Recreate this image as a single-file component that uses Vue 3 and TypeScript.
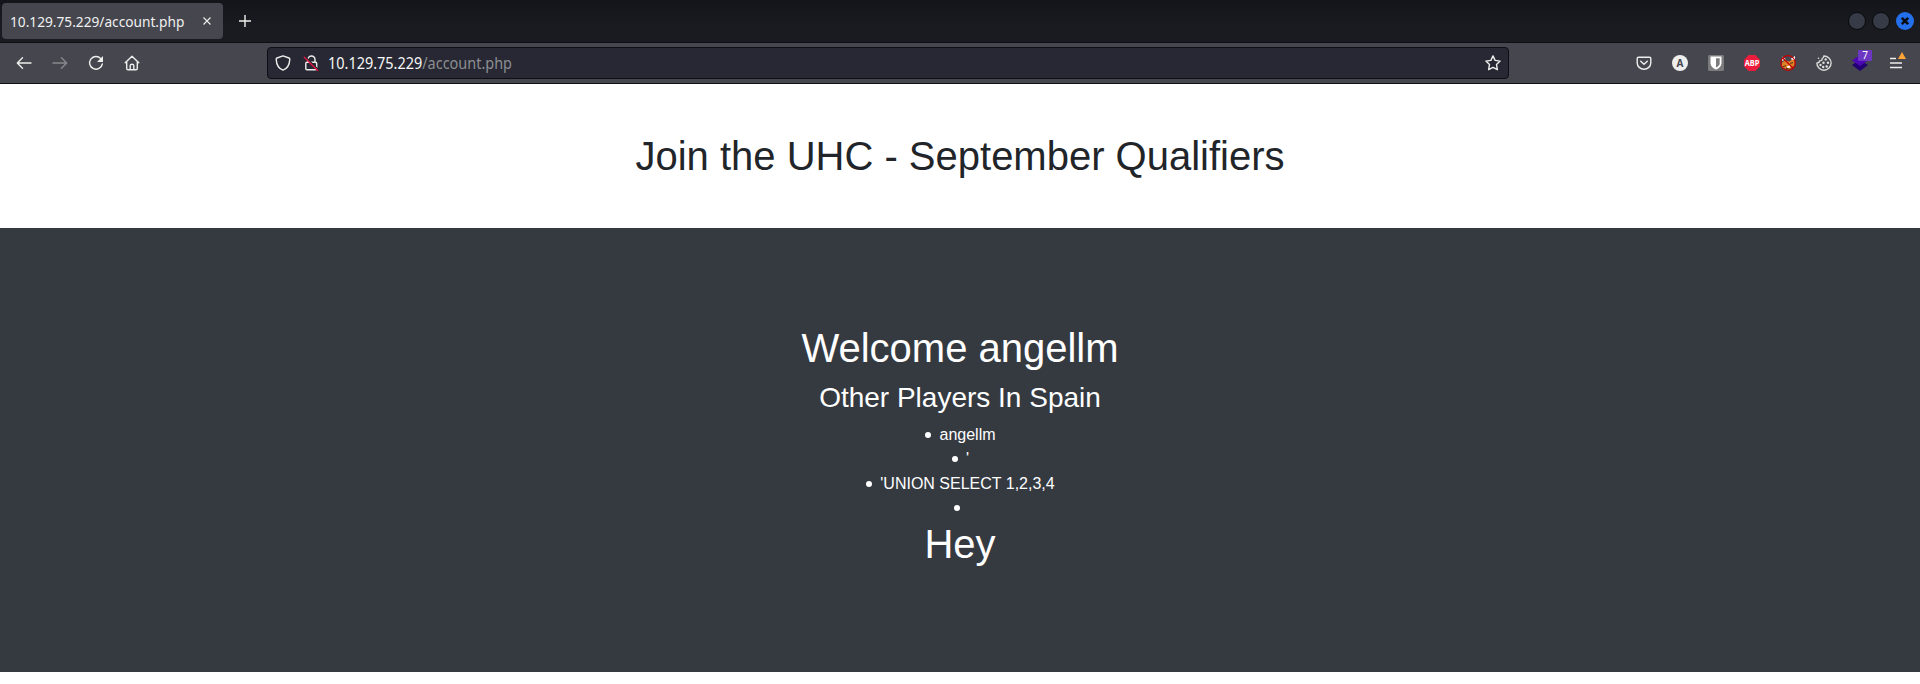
<script setup lang="ts">
const host = '10.129.75.229'
const path = '/account.php'
const players: string[] = ['angellm', "'", "'UNION SELECT 1,2,3,4", '']
</script>

<template>
  <div class="window">
    <header class="tabs">
      <div class="tab">
        <span class="tab-title">{{ host }}{{ path }}</span>
        <svg class="tab-close" viewBox="0 0 10 10"><path d="M1.500 1.500l7 7M8.500 1.500l-7 7" /></svg>
      </div>
      <svg class="new-tab" viewBox="0 0 14 14"><path d="M7 1v12M1 7h12" /></svg>
      <div class="controls">
        <i class="dot"></i>
        <i class="dot"></i>
        <i class="dot close">
          <svg viewBox="0 0 18 18"><path d="M5.800 5.800l6.400 6.400M12.200 5.800l-6.400 6.400" /></svg>
        </i>
      </div>
    </header>

    <nav class="toolbar">
      <div class="nav-buttons">
        <svg class="icon" viewBox="0 0 16 16"><path d="M15 8H1.500M6.500 2.800L1.300 8l5.200 5.200" /></svg>
        <svg class="icon faded" viewBox="0 0 16 16"><path d="M1 8h13.500M9.500 2.800L14.700 8l-5.200 5.200" /></svg>
        <svg class="icon" viewBox="0 0 16 16"><path d="M12.800 3.600A6.400 6.400 0 1 0 14.300 9" /><path class="fill" d="M15 1v6H9z" /></svg>
        <svg class="icon" viewBox="0 0 16 16"><path d="M1.200 7.800L8 1.200l6.800 6.600M2.700 6.700v6.800q0 1.300 1.300 1.300h8q1.300 0 1.300-1.300V6.700M6.200 14.500v-4q0-1.300 1.800-1.300t1.800 1.300v4" /></svg>
      </div>

      <div class="address">
        <svg class="icon" viewBox="0 0 16 16"><path d="M8 .9L14 3q.9.300.8 1.400C14.500 9.600 12.400 13.600 8 15.200 3.600 13.600 1.500 9.600 1.200 4.400Q1.100 3.300 2 3z" /></svg>
        <svg class="icon lock" viewBox="0 0 16 16">
          <path d="M5 7V4.500a3.500 3.500 0 0 1 7 0V7M4 7.200h8.500q1.200 0 1.200 1.200v5.200q0 1.200-1.200 1.200H4q-1.200 0-1.200-1.200V8.400Q2.800 7.200 4 7.200z" />
          <path class="shade" d="M2.200 1.600l13 12.800" /><path class="strike" d="M1.300 2.200l13.500 13.500" />
        </svg>
        <span class="url"><b>{{ host }}</b>{{ path }}</span>
        <svg class="icon star" viewBox="0 0 16 16"><path d="M8 .9l2.100 4.500 5 .7-3.600 3.500.9 5L8 12.300l-4.400 2.300.9-5L.9 6.100l5-.7z" /></svg>
      </div>

      <div class="extensions">
        <svg class="icon" viewBox="0 0 16 16"><path d="M2.500 2.200h11q1.300 0 1.300 1.300V8a6.800 6.200 0 0 1-13.600 0V3.500q0-1.300 1.300-1.300zM4.700 6.200L8 9.300l3.300-3.100" /></svg>
        <svg class="icon" viewBox="0 0 16 16"><circle class="disc" cx="8" cy="8" r="8" /><text class="letter" x="8" y="11.600">A</text></svg>
        <svg class="icon" viewBox="0 0 16 16">
          <rect class="vault" width="16" height="16" rx="1.500" />
          <path class="white" d="M2.500 1.500h11v6.800c0 3-2.500 5-5.500 6.300-3-1.300-5.500-3.300-5.500-6.300z" />
          <path class="vault" d="M8 3.200h3.700v5.200c0 1.700-1.600 3-3.700 4.200z" />
        </svg>
        <svg class="icon" viewBox="0 0 16 16"><path class="red" d="M4.700 0h6.600L16 4.700v6.600L11.300 16H4.700L0 11.300V4.700z" /><text class="abp" x="8" y="10.800" textLength="14.600" lengthAdjust="spacingAndGlyphs">ABP</text></svg>
        <svg class="icon" viewBox="0 0 16 16">
          <path class="fox" d="M1.500 10.500L2.500 7l3-1.500 4 1 3-2.500 2.500 1-.5 5-2.500 3-4 1.500-4.500-1.500z" />
          <path class="white" d="M2 6V1.500l4 2.800zM10.500 4L15 1v4.500zM7 11.200l4-1.200-1 2.500-2.500.7z" />
          <path class="mask" d="M3.500 11.500l2-.7M10.500 8.300l2-.6M6.500 13.300l1.500.2" />
          <circle class="ban" cx="8" cy="8" r="7.300" /><path class="ban" d="M2.800 3l10.400 10.200" />
        </svg>
        <svg class="icon cookie" viewBox="0 0 16 16">
          <path d="M7.800 1A7.100 7.100 0 1 1 .9 7.900q2.400.2 2.600-2 3 .1 2.700-2.500Q7.800 3 7.800 1z" />
          <g class="chips"><circle cx="9.700" cy="4.400" r="1.200" /><circle cx="7.500" cy="7.800" r="1.200" /><circle cx="12" cy="7.800" r="1.200" /><circle cx="4.500" cy="10" r="1.200" /><circle cx="7.200" cy="12" r="1.200" /><circle cx="10.700" cy="11.500" r="1.200" /><circle cx="2.500" cy="3.200" r=".8" /></g>
        </svg>
        <div class="stack">
          <svg class="icon" viewBox="0 0 16 16"><path class="layer-low" d="M0 10l8-5 8 5-8 6z" /><path class="layer-top" d="M0 5.500L8 0l8 5.500L8 11z" /></svg>
          <span class="count">7</span>
        </div>
        <div class="stack">
          <svg class="icon menu" viewBox="0 0 16 16"><path d="M2 3.500h6M2 8h12M2 12.500h12" /></svg>
          <svg class="warning" viewBox="0 0 8 7"><path d="M4 0L8 7H0z" /></svg>
        </div>
      </div>
    </nav>

    <main>
      <section class="banner"><h1>Join the UHC - September Qualifiers</h1></section>
      <section class="account">
        <h1>Welcome angellm</h1>
        <h2>Other Players In Spain</h2>
        <ul>
          <li v-for="(player, i) in players" :key="i"><span class="bullet"></span>{{ player }}</li>
        </ul>
        <h1>Hey</h1>
      </section>
    </main>
  </div>
</template>

<style>
body { margin: 0; background: #fff; }
</style>

<style scoped>
* { box-sizing: border-box; }
.window { height: 684px; overflow: hidden; font-family: "Liberation Sans", Arial, sans-serif; }
.tabs {
  height: 43px; display: flex; align-items: center; padding: 0 6px 0 2px;
  background: linear-gradient(#14151a, #1a1b20 65%, #1a1b20); border-bottom: 1px solid #0e0f12;
}
.tab {
  width: 221px; height: 36px; margin-bottom: 1px; padding: 0 11px 0 8px;
  display: flex; align-items: center; justify-content: space-between;
  border-radius: 4px; background: #45464e; color: #f0f0f0;
}
.tab-title, .url { font-family: "Noto Sans", sans-serif; white-space: nowrap; transform-origin: left center; }
.tab-title { width: 180px; font-size: 14.670px; transform: scaleX(.934); }
svg { display: block; flex: none; fill: none; stroke: #eeeeec; stroke-width: 1.400; }
.tab-close { width: 10px; height: 10px; stroke-width: 1.100; }
.new-tab { width: 14px; height: 14px; margin-left: 15px; }
.controls { margin-left: auto; display: flex; align-items: center; gap: 6px; }
.dot { width: 18px; height: 18px; border-radius: 50%; background: #363b47; border: 1px solid #08090b; }
.close { background: #2470ec; border: 0; }
.close svg { stroke: #0b0d14; stroke-width: 2.600; }

.toolbar {
  height: 41px; display: flex; align-items: center; background: #45464e;
  border-bottom: 1px solid #101014; padding: 0 16px;
}
.nav-buttons { display: flex; gap: 20px; width: 251px; flex: none; }
.icon { width: 16px; height: 16px; stroke-linecap: round; stroke-linejoin: round; }
.faded { opacity: .4; }
.fill { fill: #eeeeec; stroke: none; }
.address {
  width: 1242px; height: 32px; margin-bottom: 1px; flex: none; display: flex; align-items: center; padding: 0 7px;
  background: #272833; border: 1px solid #0e0f14; border-radius: 4px;
}
.lock { margin-left: 12px; }
.strike { stroke: #e2143f; }
.shade { stroke: #272833; }
.url { margin-left: 9px; font-size: 15.500px; color: #8d8e92; transform: scaleX(.932); }
.url b { font-weight: 400; color: #f7f7f7; }
.star { margin-left: auto; }
.extensions { margin-left: auto; display: flex; gap: 20px; }
.disc { fill: #eeeeec; stroke: none; }
.letter { font: bold 10px "Noto Sans", sans-serif; fill: #45464e; stroke: none; text-anchor: middle; }
.vault { fill: #7b7b7b; stroke: none; }
.white { fill: #fff; stroke: none; }
.red { fill: #ed1c3c; stroke: none; }
.abp { font: bold 8px "Noto Sans", sans-serif; fill: #fff; stroke: none; text-anchor: middle; }
.fox { fill: #df8125; stroke: none; }
.mask { stroke: #5b3920; stroke-width: 1.200; }
.ban { stroke: #c50000; stroke-width: 1.200; }
.chips { fill: #e0e0df; stroke: none; }
.cookie { stroke: #d9d9d8; }
.layer-low { fill: #210073; stroke: none; }
.layer-top { fill: #4c08b5; stroke: none; }
.stack { position: relative; width: 16px; height: 16px; }
.count {
  position: absolute; left: 6px; top: -5px; width: 14px; height: 11px; border-radius: 1px;
  background: #6c38c1; color: #fff; font: 10px/11px "Noto Sans", sans-serif; text-align: center;
}
.menu { stroke-linecap: butt; }
.warning { position: absolute; left: 10px; top: -3px; width: 8px; height: 7px; fill: #ffa436; stroke: none; }

h1, h2, ul { margin: 0; padding: 0; font-weight: 400; }
h1 { font-size: 40px; line-height: 48px; }
h2 { margin: 9px 0 8px; font-size: 28px; line-height: 34px; }
.banner { height: 144px; padding: 48px 0; text-align: center; color: #212529; }
.account { height: 444px; padding-top: 96px; text-align: center; color: #fff; background: #353a41; }
ul { list-style: none; padding-left: 1px; font-size: 16px; line-height: 24.250px; }
li { height: 24.250px; }
.bullet { display: inline-block; width: 6px; height: 6px; border-radius: 50%; margin-right: 8px; vertical-align: 2px; background: #fff; }
</style>
